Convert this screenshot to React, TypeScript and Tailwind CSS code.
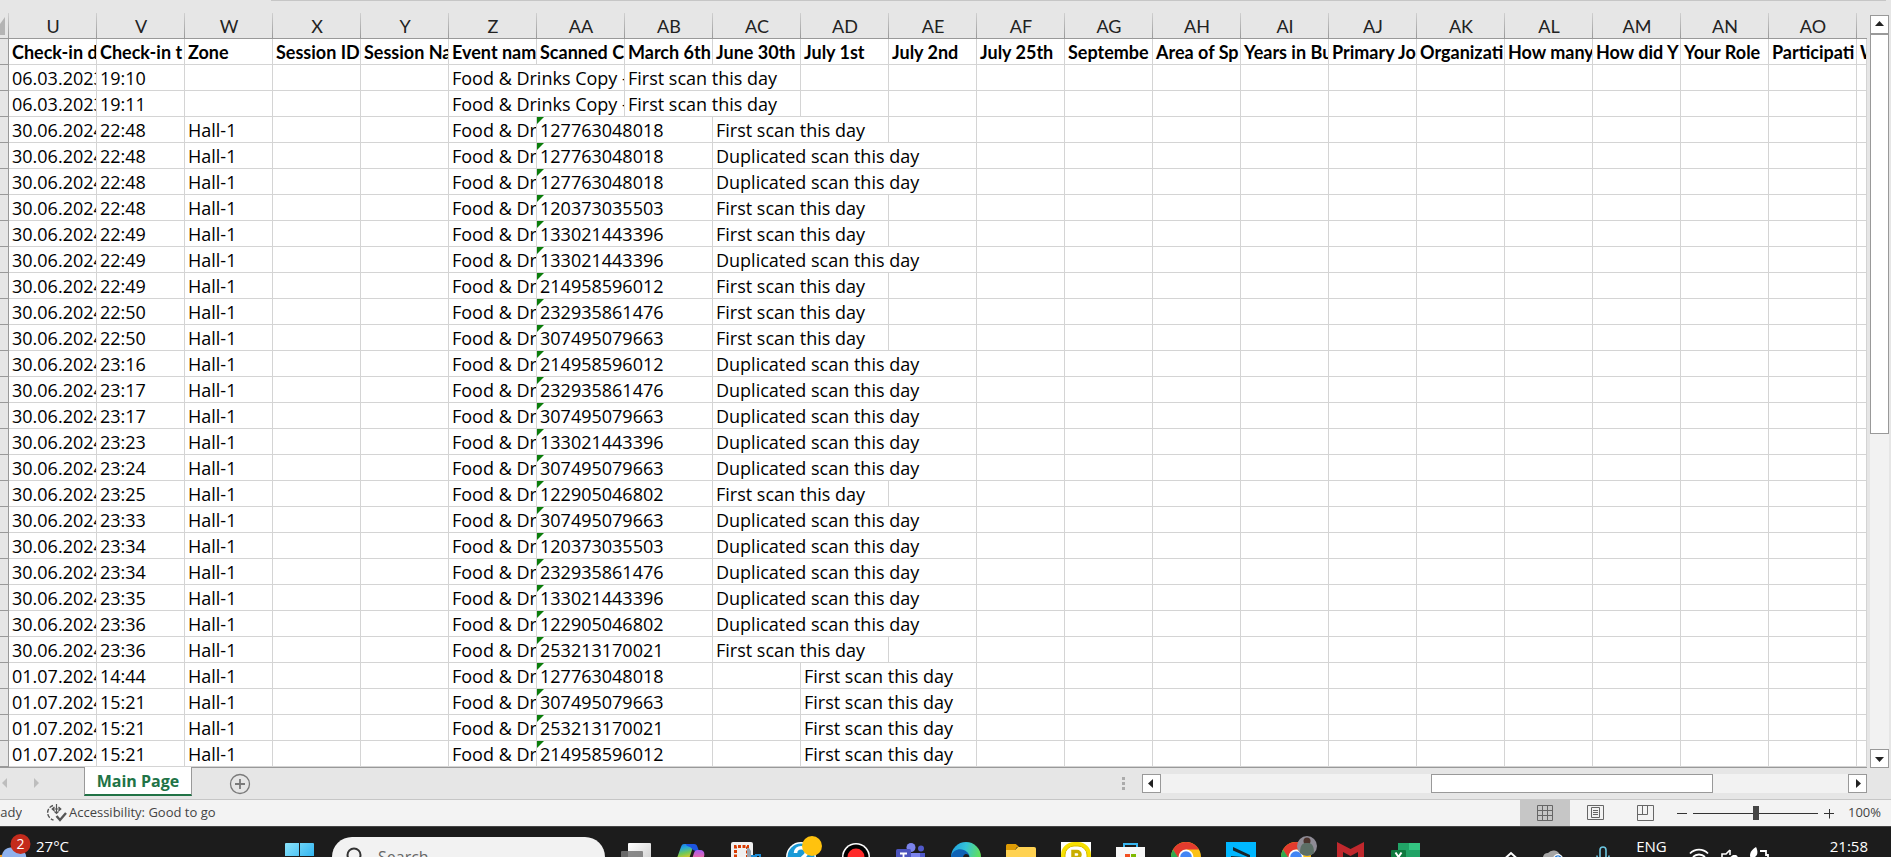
import type { ReactNode } from 'react';
import clsx from 'clsx';

type Scan = {
  date: string;
  time: string;
  code?: string;
  status: 'First' | 'Duplicated';
};

const columns = [
  { id: 'U', title: 'Check-in d' },
  { id: 'V', title: 'Check-in t' },
  { id: 'W', title: 'Zone' },
  { id: 'X', title: 'Session ID' },
  { id: 'Y', title: 'Session Na' },
  { id: 'Z', title: 'Event nam' },
  { id: 'AA', title: 'Scanned C' },
  { id: 'AB', title: 'March 6th' },
  { id: 'AC', title: 'June 30th' },
  { id: 'AD', title: 'July 1st' },
  { id: 'AE', title: 'July 2nd' },
  { id: 'AF', title: 'July 25th' },
  { id: 'AG', title: 'Septembe' },
  { id: 'AH', title: 'Area of Sp' },
  { id: 'AI', title: 'Years in Bu' },
  { id: 'AJ', title: 'Primary Jo' },
  { id: 'AK', title: 'Organizati' },
  { id: 'AL', title: 'How many' },
  { id: 'AM', title: 'How did Y' },
  { id: 'AN', title: 'Your Role' },
  { id: 'AO', title: 'Participati' },
];

const scans: Scan[] = [
  { date: '06.03.2023', time: '19:10', status: 'First' },
  { date: '06.03.2023', time: '19:11', status: 'First' },
  { date: '30.06.2024', time: '22:48', code: '127763048018', status: 'First' },
  { date: '30.06.2024', time: '22:48', code: '127763048018', status: 'Duplicated' },
  { date: '30.06.2024', time: '22:48', code: '127763048018', status: 'Duplicated' },
  { date: '30.06.2024', time: '22:48', code: '120373035503', status: 'First' },
  { date: '30.06.2024', time: '22:49', code: '133021443396', status: 'First' },
  { date: '30.06.2024', time: '22:49', code: '133021443396', status: 'Duplicated' },
  { date: '30.06.2024', time: '22:49', code: '214958596012', status: 'First' },
  { date: '30.06.2024', time: '22:50', code: '232935861476', status: 'First' },
  { date: '30.06.2024', time: '22:50', code: '307495079663', status: 'First' },
  { date: '30.06.2024', time: '23:16', code: '214958596012', status: 'Duplicated' },
  { date: '30.06.2024', time: '23:17', code: '232935861476', status: 'Duplicated' },
  { date: '30.06.2024', time: '23:17', code: '307495079663', status: 'Duplicated' },
  { date: '30.06.2024', time: '23:23', code: '133021443396', status: 'Duplicated' },
  { date: '30.06.2024', time: '23:24', code: '307495079663', status: 'Duplicated' },
  { date: '30.06.2024', time: '23:25', code: '122905046802', status: 'First' },
  { date: '30.06.2024', time: '23:33', code: '307495079663', status: 'Duplicated' },
  { date: '30.06.2024', time: '23:34', code: '120373035503', status: 'Duplicated' },
  { date: '30.06.2024', time: '23:34', code: '232935861476', status: 'Duplicated' },
  { date: '30.06.2024', time: '23:35', code: '133021443396', status: 'Duplicated' },
  { date: '30.06.2024', time: '23:36', code: '122905046802', status: 'Duplicated' },
  { date: '30.06.2024', time: '23:36', code: '253213170021', status: 'First' },
  { date: '01.07.2024', time: '14:44', code: '127763048018', status: 'First' },
  { date: '01.07.2024', time: '15:21', code: '307495079663', status: 'First' },
  { date: '01.07.2024', time: '15:21', code: '253213170021', status: 'First' },
  { date: '01.07.2024', time: '15:21', code: '214958596012', status: 'First' },
];

function Cell({ children, span = 1, flagged = false }: { children?: ReactNode; span?: number; flagged?: boolean }) {
  return (
    <td
      colSpan={span}
      className="relative h-[26px] overflow-hidden border-r border-b border-[#d4d4d4] p-0 pt-[2px] pl-[3px] leading-[23px] whitespace-nowrap"
    >
      {flagged && (
        <svg className="absolute top-0 left-0" width="7" height="7" viewBox="0 0 7 7">
          <path d="M0 0h7L0 7z" fill="#0a7d0a" />
        </svg>
      )}
      {children}
    </td>
  );
}

// Long values spill over the empty cells to their right, so they take a wider span
function ScanRow({ scan }: { scan: Scan }) {
  const status = `${scan.status} scan this day`;
  const cells: ReactNode[] = [];
  let used = 0;
  const add = (text?: string, span = 1, flagged = false) => {
    cells.push(<Cell key={used} span={span} flagged={flagged}>{text}</Cell>);
    used += span;
  };

  add(scan.date);
  add(scan.time);
  add(scan.code ? 'Hall-1' : undefined);
  add();
  add();
  if (scan.code) {
    add('Food & Dr');
    add(scan.code, 2, true);
    if (scan.date.startsWith('01')) add();
  } else {
    add('Food & Drinks Copy -', 2);
  }
  add(status, scan.status === 'Duplicated' ? 3 : 2);
  while (used < columns.length + 1) add();

  return (
    <tr>
      <td className="border-r border-b border-[#999] bg-[#e6e6e6] p-0" />
      {cells}
    </tr>
  );
}

function Sheet() {
  return (
    <table className="w-full table-fixed border-separate border-spacing-0 bg-white text-[18px] text-black">
      <colgroup>
        <col className="w-[9px]" />
        {columns.map((c) => (
          <col key={c.id} className="w-[88px]" />
        ))}
        <col />
      </colgroup>
      <thead className="font-[Lato,sans-serif]">
        <tr className="bg-[#e6e6e6]">
          <th className="relative border-b border-[#999] p-0">
            <svg className="absolute top-1 left-0" width="5" height="18" viewBox="0 0 5 18">
              <path d="M5 0v18H0V7z" fill="#b4b4b4" />
            </svg>
          </th>
          {columns.map((c) => (
            <th
              key={c.id}
              className="relative h-[26px] border-b border-[#999] p-0 pt-[2px] leading-[23px] font-normal text-[#222] before:absolute before:top-0 before:left-[-1px] before:h-full before:w-px before:bg-linear-to-b before:from-[#d0d0d0] before:to-[#999]"
            >
              {c.id}
            </th>
          ))}
          <th className="relative border-b border-[#999] p-0 before:absolute before:top-0 before:left-[-1px] before:h-full before:w-px before:bg-linear-to-b before:from-[#d0d0d0] before:to-[#999]" />
        </tr>
        <tr className="font-bold">
          <td className="border-r border-b border-[#999] bg-[#e6e6e6] p-0" />
          {columns.map((c) => (
            <Cell key={c.id}>{c.title}</Cell>
          ))}
          <Cell>W</Cell>
        </tr>
      </thead>
      <tbody>
        {scans.map((scan, i) => (
          <ScanRow key={i} scan={scan} />
        ))}
      </tbody>
    </table>
  );
}

const arrows = {
  up: 'M5 11h9L9.500 6z',
  down: 'M5 8h9L9.500 13z',
  left: 'M11 5v9L6 9.500z',
  right: 'M8 5v9l5-4.500z',
};

function ScrollButton({ dir }: { dir: keyof typeof arrows }) {
  return (
    <button aria-label={`Scroll ${dir}`} className="size-[19px] shrink-0 border border-[#999] bg-white">
      <svg className="-m-px" width="19" height="19" viewBox="0 0 19 19">
        <path d={arrows[dir]} fill="#222" />
      </svg>
    </button>
  );
}

function SheetBar() {
  return (
    <div className="flex h-[32px] shrink-0 items-start border-b border-[#c6c6c6] bg-[#e6e6e6] pr-[24px]">
      <div className="flex w-[84px] items-center gap-[24px] pt-[10px]">
        <svg width="8" height="10" viewBox="0 0 8 10"><path d="M7 0v10L2 5z" fill="#bdbdbd" /></svg>
        <svg width="8" height="10" viewBox="0 0 8 10"><path d="M2 0v10l5-5z" fill="#bdbdbd" /></svg>
      </div>
      <button className="-mt-px h-[29px] w-[108px] border-x border-b-2 border-x-[#999] border-b-[#217346] bg-white text-base font-bold text-[#217346]">
        Main Page
      </button>
      <button aria-label="New sheet" className="ml-[37px] pt-[5px]">
        <svg width="22" height="22" viewBox="0 0 22 22" fill="none" stroke="#7a7a7a">
          <circle cx="11" cy="11" r="9.500" strokeWidth="1.300" />
          <path d="M11 6v10M6 11h10" strokeWidth="1.800" />
        </svg>
      </button>
      <div className="flex-1" />
      <svg className="mt-[9px] mr-[17px]" width="3" height="13" viewBox="0 0 3 13">
        <path d="M0 0h3v3H0zM0 5h3v3H0zM0 10h3v3H0z" fill="#ababab" />
      </svg>
      <div className="mt-[6px] flex w-[725px] bg-[#f2f2f2]">
        <ScrollButton dir="left" />
        <div className="flex flex-1">
          <div className="ml-[270px] w-[282px] border border-[#999] bg-white" />
        </div>
        <ScrollButton dir="right" />
      </div>
    </div>
  );
}

function StatusBar() {
  const view = 'flex h-full w-[50px] items-center justify-center';
  return (
    <div className="flex h-[26px] shrink-0 items-center bg-[#f3f3f3] text-[13px] text-[#444]">
      <div className="flex w-[22px] justify-end overflow-hidden">Ready</div>
      <button className="ml-[24px] flex items-center gap-[2px]">
        <svg width="21" height="20" viewBox="0 0 21 20" fill="none" stroke="#555" strokeWidth="1.400">
          <path d="M7 2.500A7.500 7.500 0 0 0 7.500 17" strokeDasharray="4 1.500" />
          <path d="M6 6h9M8.500 4L6.200 6l2.300 2M12.500 4L14.800 6l-2.300 2M10.500 1v9M8.500 8.500l2 2 2-2" strokeWidth="1.200" />
          <path d="M10.500 13l3.500 4 6-7" strokeWidth="2.400" />
        </svg>
        Accessibility: Good to go
      </button>
      <div className="flex-1" />
      <button aria-label="Normal view" className={clsx(view, 'bg-[#c6c6c6]')}>
        <svg width="17" height="17" viewBox="0 0 17 17" fill="none" stroke="#666">
          <path d="M.5.500h15v15H.5zM5.500.500v15M10.500.500v15M.5 5.500h15M.5 10.500h15" />
        </svg>
      </button>
      <button aria-label="Page layout view" className={view}>
        <svg width="17" height="16" viewBox="0 0 17 16" fill="none" stroke="#666">
          <path d="M.5.500h16v14H.5zM4.500 2.500h8v10h-8zM6 5.500h5M6 7.500h5M6 9.500h5" />
        </svg>
      </button>
      <button aria-label="Page break view" className={view}>
        <svg width="17" height="17" viewBox="0 0 17 17" fill="none" stroke="#666">
          <path d="M.5.500h16v15H.5zM5.500.500v9M.5 9.500h10v-9" />
        </svg>
      </button>
      <button aria-label="Zoom out" className="ml-[7px]">
        <svg width="10" height="11" viewBox="0 0 10 11"><path d="M0 5.500h10" stroke="#333" /></svg>
      </button>
      <input
        type="range"
        aria-label="Zoom"
        min={0}
        max={100}
        defaultValue={50}
        className="mx-[6px] h-4 w-[125px] appearance-none bg-[linear-gradient(#333,#333)] bg-[length:100%_1px] bg-center bg-no-repeat [&::-webkit-slider-thumb]:h-[14px] [&::-webkit-slider-thumb]:w-[6px] [&::-webkit-slider-thumb]:appearance-none [&::-webkit-slider-thumb]:bg-[#444]"
      />
      <button aria-label="Zoom in">
        <svg width="10" height="11" viewBox="0 0 10 11"><path d="M0 5.500h10M5.500 1v9.500" stroke="#333" /></svg>
      </button>
      <button className="w-[57px] pr-[10px] text-right">100%</button>
    </div>
  );
}

function ChromeMark() {
  return (
    <>
      <circle cx="15" cy="15" r="15" fill="#fbc116" />
      <path d="M2 7.500A15 15 0 0 1 28 7.500H15L8.500 18.800z" fill="#e33b2e" />
      <path d="M2 7.500A15 15 0 0 0 14 30l7-11.500H9z" fill="#2da94f" />
      <circle cx="15" cy="15" r="7.500" fill="#fff" />
      <circle cx="15" cy="15" r="5.800" fill="#4285f4" />
    </>
  );
}

const apps: { name: string; icon: ReactNode }[] = [
  {
    name: 'Task view',
    icon: (
      <>
        <defs>
          <linearGradient id="tv" x2="1" y2="1"><stop stopColor="#fff" /><stop offset="1" stopColor="#ccc" /></linearGradient>
        </defs>
        <rect x="7" y="1" width="23" height="22" rx="1" fill="url(#tv)" />
        <rect y="9" width="22" height="20" rx="1" fill="#777" fillOpacity=".85" />
      </>
    ),
  },
  {
    name: 'Copilot',
    icon: (
      <>
        <defs>
          <linearGradient id="cpA" x2=".2" y2="1"><stop stopColor="#1b6fe8" /><stop offset=".25" stopColor="#25a8dc" /><stop offset=".5" stopColor="#6fc95a" /><stop offset=".8" stopColor="#f2c71e" /></linearGradient>
          <linearGradient id="cpB" x2="0" y2="1"><stop stopColor="#a35cf5" /><stop offset=".4" stopColor="#ee6aa0" /><stop offset="1" stopColor="#ff8a4c" /></linearGradient>
        </defs>
        <path d="M8 2h10l-3 9-4 12H4c-4 0-4-4-3-7L5 5c.6-2 1.500-3 3-3z" fill="url(#cpA)" />
        <path d="M10 2h8c2 0 3 1 3.500 3l1.500 4h-3c-3 0-4-3-6-4s-4-1-4-3z" fill="#1c55e0" />
        <path d="M21 8h3c4 0 5 3 4 7l-3 9c-1 3-2.500 4-5 4h-7l4-14c1-4 2-6 4-6z" fill="url(#cpB)" />
      </>
    ),
  },
  {
    name: 'Snipping tool',
    icon: (
      <>
        <rect width="22" height="26" rx="2" fill="#f0f0f0" />
        <path d="M4.500 20V4.500h12V15" fill="none" stroke="#d83b01" strokeWidth="3" strokeDasharray="3 1.500" />
        <path d="M16 6h2l2 3v7h-4z" fill="#9aa3ad" />
        <path d="M21 17v-3h3M25 17v-4h4v4" fill="none" stroke="#1a8ad4" strokeWidth="2" />
      </>
    ),
  },
  {
    name: 'Help',
    icon: (
      <>
        <circle cx="15" cy="15" r="15" fill="#fff" />
        <circle cx="15" cy="15" r="13.500" fill="#1a9ad7" />
        <path d="M9.500 11c0-7 11-7 11-.5 0 4-5.500 4-5.500 9M15 22v3" fill="none" stroke="#fff" strokeWidth="3.600" />
        <circle cx="26" cy="4" r="10" fill="#ffc20e" />
      </>
    ),
  },
  {
    name: 'Recorder',
    icon: (
      <>
        <circle cx="15" cy="15" r="14" fill="#fff" />
        <circle cx="15" cy="15" r="12.500" fill="#000" />
        <circle cx="15" cy="15" r="8.500" fill="#ff2a2a" />
      </>
    ),
  },
  {
    name: 'Teams',
    icon: (
      <>
        <circle cx="15" cy="5.500" r="4.500" fill="#7b83eb" />
        <circle cx="25" cy="6.500" r="3" fill="#5059c9" />
        <path d="M18 11h11v10a5 5 0 0 1-8 3z" fill="#5059c9" />
        <path d="M9 11h15v12a7.500 7.500 0 0 1-15 0z" fill="#7b83eb" />
        <rect y="7" width="15" height="16" rx="1.500" fill="#4b53bc" />
        <path d="M4 11.500h7M7.500 11.500v8" stroke="#fff" strokeWidth="1.800" />
      </>
    ),
  },
  {
    name: 'Edge',
    icon: (
      <>
        <defs>
          <linearGradient id="eg" x2="1" y2=".3"><stop stopColor="#1d9be0" /><stop offset=".5" stopColor="#34c3d8" /><stop offset="1" stopColor="#62e05a" /></linearGradient>
        </defs>
        <circle cx="15" cy="15" r="15" fill="url(#eg)" />
        <path d="M0 14c2-7 11-9 16-4 2 2 3 4 2 6l-5 1c0 6 6 8 11 8a15 15 0 0 1-24-11z" fill="#0f62b5" />
        <path d="M12 16c0-2 1-4 3-4s4 2 3 4-1 2-2 3z" fill="#1c1c1c" />
      </>
    ),
  },
  {
    name: 'File explorer',
    icon: (
      <>
        <path d="M0 4c0-1.500.7-2 2-2h7c1 0 1.500.5 2 1l2 2h-2l-2 3H0z" fill="#dd9b04" />
        <path d="M0 8h9l3-3h16c1.500 0 2 .7 2 2v18c0 1-.7 2-2 2H2c-1.300 0-2-1-2-2z" fill="#ffd252" />
      </>
    ),
  },
  {
    name: 'P app',
    icon: (
      <>
        <path d="M0 0h30v30H0z" fill="#fff" />
        <rect x="2" y="2" width="26" height="26" rx="11" fill="#fff" stroke="#f7e000" strokeWidth="4" />
        <rect x="4" y="4" width="22" height="22" rx="9" fill="none" stroke="#d9bd00" strokeWidth="1" />
        <path d="M12 22V9.500h4a3 3 0 0 1 0 6h-4" fill="none" stroke="#c9ae00" strokeWidth="3.500" />
      </>
    ),
  },
  {
    name: 'Store',
    icon: (
      <>
        <path d="M8 6V2h13v4" fill="none" stroke="#38b6f1" strokeWidth="2" />
        <path d="M0 5h29v20a3 3 0 0 1-3 3H3a3 3 0 0 1-3-3z" fill="#f7f7f7" />
        <path d="M9 12h5v5H9z" fill="#f25022" />
        <path d="M15 12h5v5h-5z" fill="#7fba00" />
        <path d="M9 18h5v5H9z" fill="#00a4ef" />
        <path d="M15 18h5v5h-5z" fill="#ffb900" />
      </>
    ),
  },
  { name: 'Chrome', icon: <ChromeMark /> },
  {
    name: 'Media app',
    icon: (
      <>
        <path d="M0 0h30v30H0z" fill="#00b7ff" />
        <path d="M7 5l17 8v3L7 8.500zM5 14l19 1.500L6 25v-4l10-5-11-.5z" fill="#16242b" />
      </>
    ),
  },
  {
    name: 'Chrome profile',
    icon: (
      <>
        <ChromeMark />
        <circle cx="26" cy="4" r="10" fill="#8f8c96" />
        <circle cx="26" cy="-1" r="3.500" fill="#4c332c" />
        <path d="M19 11c0-9 3-10 7-10s7 1 7 10a10 10 0 0 1-14 0z" fill="#5d6f66" />
      </>
    ),
  },
  {
    name: 'McAfee',
    icon: <path d="M1 0l13.500 7L28 0v22l-6 3V10l-7.500 4L7 10v15l-6-3z" fill="#c0282d" />,
  },
  {
    name: 'Excel',
    icon: (
      <>
        <path d="M7 1h11v14H7z" fill="#21a366" />
        <path d="M18 1h11v7H18z" fill="#33c481" />
        <path d="M18 8h11v7H18z" fill="#21a366" />
        <path d="M7 15h22v13H7z" fill="#107c41" />
        <rect y="8" width="15" height="15" rx="1" fill="#0f7a3f" />
        <path d="M4.500 10.500l6 9M10.500 10.500l-6 9" stroke="#fff" strokeWidth="2" />
      </>
    ),
  },
];

function Taskbar() {
  return (
    <div className="flex h-[61px] shrink-0 items-center border-t border-[#444] bg-[#1c1c1c] text-[15px] leading-[18px] text-white">
      <div className="flex w-[285px] items-start gap-[4px] self-start pt-[7px]">
        <svg width="32" height="24" viewBox="0 0 32 24">
          <defs>
            <linearGradient id="moon" x2="1"><stop stopColor="#f59a1c" /><stop offset="1" stopColor="#ffc94a" /></linearGradient>
          </defs>
          <path d="M11 6c3 8-2 15-11 15v3h16z" fill="url(#moon)" />
          <path d="M2 24a9 9 0 0 1 16-7 6 6 0 0 1 8 7z" fill="#8fb1ec" />
          <circle cx="20.500" cy="10" r="10" fill="#c42b1c" />
          <text x="20.500" y="15" textAnchor="middle" fontSize="14" fill="#fff">2</text>
        </svg>
        <span className="pt-[3px]">27°C</span>
      </div>
      <button aria-label="Start">
        <svg width="30" height="30" viewBox="0 0 30 30">
          <defs>
            <linearGradient id="win" x2="1" y2="1"><stop stopColor="#8be3fb" /><stop offset="1" stopColor="#12a5ee" /></linearGradient>
          </defs>
          <path d="M0 2q0-1 1-1h13v13H0zM15 1h13q1 0 1 1v12H15zM0 15h14v14H1q-1 0-1-1zM15 15h14v13q0 1-1 1H15z" fill="url(#win)" />
        </svg>
      </button>
      <label className="mr-[16px] ml-[17px] flex h-[40px] w-[273px] items-center gap-[14px] rounded-full bg-[#f2f2f2] pl-[14px]">
        <svg className="shrink-0" width="18" height="20" viewBox="0 0 18 20" fill="none" stroke="#333" strokeWidth="2">
          <circle cx="8" cy="8" r="6.500" />
          <path d="M3.500 13L0 18" />
        </svg>
        <input
          type="text"
          placeholder="Search"
          aria-label="Search"
          className="w-full min-w-0 bg-transparent text-base outline-none placeholder:text-[#666]"
        />
      </label>
      <div className="flex gap-[25px]">
        {apps.map((app) => (
          <button key={app.name} aria-label={app.name}>
            <svg className="overflow-visible" width="30" height="30" viewBox="0 0 30 30">{app.icon}</svg>
          </button>
        ))}
      </div>
      <div className="ml-auto flex items-start self-start pt-[10px] pr-[23px]">
        <svg className="mt-[14px] mr-[24px]" width="14" height="9" viewBox="0 0 14 9" fill="none" stroke="#fff" strokeWidth="2">
          <path d="M1 7.500l6-5.500 6 5.500" />
        </svg>
        <svg className="mt-[11px] mr-[32px]" width="22" height="16" viewBox="0 0 22 16">
          <path d="M1 9a5 5 0 0 1 5-4 7 7 0 0 1 12 2 5 5 0 0 1 1 9H3A5 5 0 0 1 1 9z" fill="#a5a5a5" />
          <circle cx="16" cy="11" r="5" fill="#fff" />
          <circle cx="16" cy="11" r="3.800" fill="#2b7cd3" />
          <path d="M13.500 11l2.500-2.500 2.500 2.500" fill="none" stroke="#fff" />
        </svg>
        <svg className="mt-[9px] mr-[26px]" width="14" height="20" viewBox="0 0 14 20" fill="none" stroke="#6cc5e0" strokeWidth="1.600">
          <rect x="4" y="1" width="6" height="12" rx="3" />
          <path d="M1 9.500a6 6 0 0 0 12 0" />
        </svg>
        <span className="mr-[22px]">ENG</span>
        <svg className="mt-[10px] mr-[12px]" width="20" height="16" viewBox="0 0 20 16" fill="none" stroke="#fff" strokeWidth="1.800">
          <path d="M1 6.500a12.500 12.500 0 0 1 18 0M4 10a8.500 8.500 0 0 1 12 0M7 13.500a4.500 4.500 0 0 1 6 0" />
        </svg>
        <svg className="mt-[12px] mr-[10px]" width="18" height="16" viewBox="0 0 18 16" fill="none" stroke="#fff" strokeWidth="1.600">
          <path d="M9 1L5 5H1v7h4l4 4" />
          <path d="M9 1v5" />
          <path d="M8 9l4-3h3c2 1 3 4 2 8H8z" fill="#fff" stroke="none" />
        </svg>
        <svg className="mt-[9px] mr-[61px]" width="20" height="20" viewBox="0 0 20 20">
          <path d="M1 10C1 5 4 3 7 1c2 4 2 8-1 10L2 13z" fill="#fff" />
          <path d="M11 5h6v4h2v4h-2v4H3v-4" fill="none" stroke="#fff" strokeWidth="1.800" />
        </svg>
        <span>21:58</span>
      </div>
    </div>
  );
}

export default function App() {
  return (
    <div className="flex h-screen flex-col overflow-hidden bg-[#e6e6e6] font-['Open_Sans',sans-serif]">
      <div className="mr-[5px] ml-[271px] h-[13px] shrink-0 border-t border-[#c6c6c6]" />
      <div className="flex shrink-0">
        <div className="min-w-0 flex-1 overflow-hidden border-b border-[#999]">
          <Sheet />
        </div>
        <div className="flex w-[24px] shrink-0 flex-col pt-[2px] pr-[2px] pl-[3px]">
          <ScrollButton dir="up" />
          <div className="flex-1 bg-[#f2f2f2]">
            <div className="h-[56%] border border-[#999] bg-white" />
          </div>
          <ScrollButton dir="down" />
        </div>
      </div>
      <SheetBar />
      <StatusBar />
      <Taskbar />
    </div>
  );
}
